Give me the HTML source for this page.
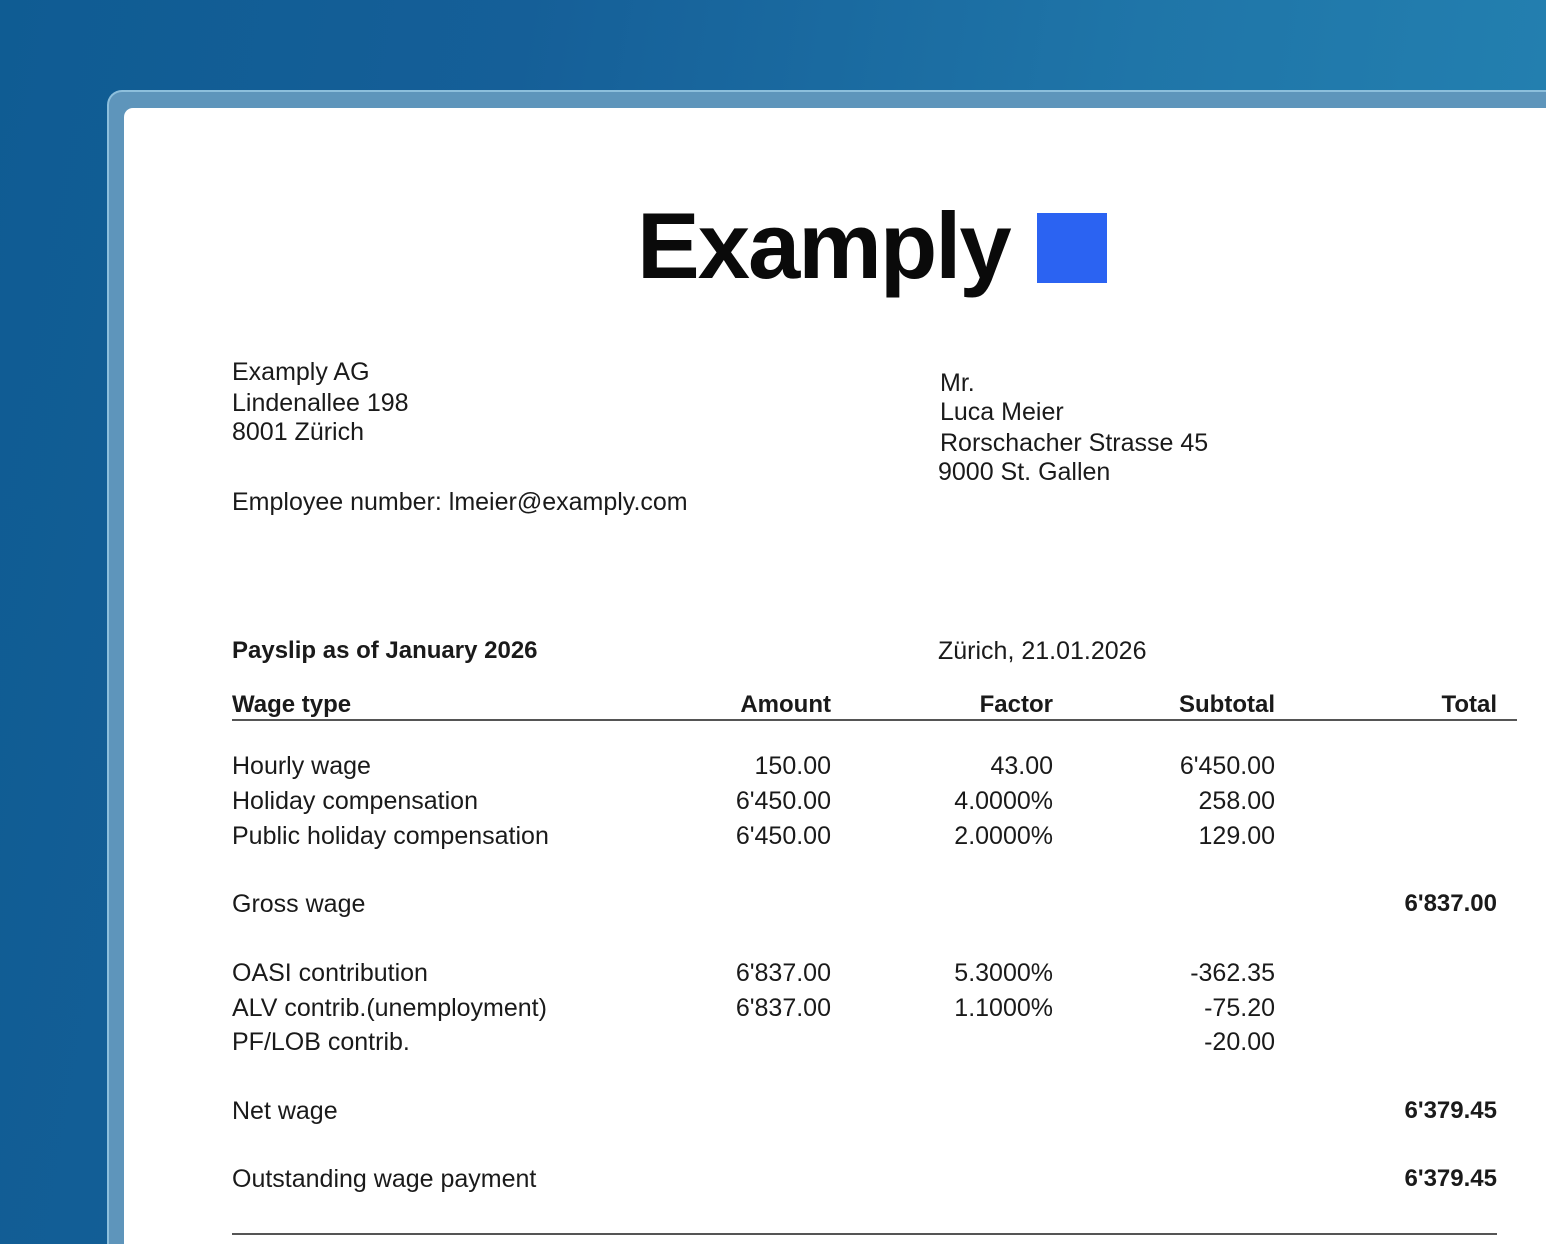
<!DOCTYPE html>
<html><head><meta charset="utf-8"><style>
html,body{margin:0;padding:0;width:1546px;height:1244px;overflow:hidden;}
body{position:relative;
background:linear-gradient(100deg,#0f5c93 0%,#155f98 30%,#1f75a8 65%,#2584b3 100%);
font-family:"Liberation Sans",Arial,sans-serif;color:#1a1a1a;}
.frame{position:absolute;left:107px;top:90px;width:1439px;height:1154px;background:#5e95bb;border-radius:15px 0 0 0;border-top:2px solid #8dbfdc;border-left:2px solid #8dbfdc;box-sizing:border-box;}
.page{position:absolute;left:124px;top:108px;width:1422px;height:1136px;background:#fff;border-radius:9px 0 0 0;}
.t{position:absolute;font-size:25px;line-height:30px;white-space:nowrap;}
.b{font-weight:bold;font-size:24px;}
.r{text-align:right;}
.logo{position:absolute;left:637px;top:186px;font-size:94px;line-height:120px;font-weight:bold;letter-spacing:-2px;color:#0a0a0a;}
.sq{position:absolute;left:1037px;top:213px;width:70px;height:70px;background:#2b63f2;}
.line{position:absolute;height:2px;background:#555;}
</style></head><body>
<div class="frame"></div>
<div class="page"></div>
<div class="logo">Examply</div>
<div class="sq"></div>

<div class="t" style="left:232px;top:357px">Examply AG</div>
<div class="t" style="left:232px;top:388px">Lindenallee 198</div>
<div class="t" style="left:232px;top:417px">8001 Zürich</div>
<div class="t" style="left:232px;top:487px">Employee number: lmeier@examply.com</div>

<div class="t" style="left:940px;top:368px">Mr.</div>
<div class="t" style="left:940px;top:397px">Luca Meier</div>
<div class="t" style="left:940px;top:428px">Rorschacher Strasse 45</div>
<div class="t" style="left:938px;top:457px">9000 St. Gallen</div>

<div class="t b" style="left:232px;top:636px">Payslip as of January 2026</div>
<div class="t" style="left:938px;top:636px">Zürich, 21.01.2026</div>

<div class="t b" style="left:232px;top:690px">Wage type</div>
<div class="t b r" style="right:715px;top:690px">Amount</div>
<div class="t b r" style="right:493px;top:690px">Factor</div>
<div class="t b r" style="right:271px;top:690px">Subtotal</div>
<div class="t b r" style="right:49px;top:690px">Total</div>
<div class="line" style="left:232px;top:719px;width:1285px"></div>

<div class="t" style="left:232px;top:751px">Hourly wage</div>
<div class="t r" style="right:715px;top:751px">150.00</div>
<div class="t r" style="right:493px;top:751px">43.00</div>
<div class="t r" style="right:271px;top:751px">6'450.00</div>

<div class="t" style="left:232px;top:786px">Holiday compensation</div>
<div class="t r" style="right:715px;top:786px">6'450.00</div>
<div class="t r" style="right:493px;top:786px">4.0000%</div>
<div class="t r" style="right:271px;top:786px">258.00</div>

<div class="t" style="left:232px;top:821px">Public holiday compensation</div>
<div class="t r" style="right:715px;top:821px">6'450.00</div>
<div class="t r" style="right:493px;top:821px">2.0000%</div>
<div class="t r" style="right:271px;top:821px">129.00</div>

<div class="t" style="left:232px;top:889px">Gross wage</div>
<div class="t b r" style="right:49px;top:889px">6'837.00</div>

<div class="t" style="left:232px;top:958px">OASI contribution</div>
<div class="t r" style="right:715px;top:958px">6'837.00</div>
<div class="t r" style="right:493px;top:958px">5.3000%</div>
<div class="t r" style="right:271px;top:958px">-362.35</div>

<div class="t" style="left:232px;top:993px">ALV contrib.(unemployment)</div>
<div class="t r" style="right:715px;top:993px">6'837.00</div>
<div class="t r" style="right:493px;top:993px">1.1000%</div>
<div class="t r" style="right:271px;top:993px">-75.20</div>

<div class="t" style="left:232px;top:1027px">PF/LOB contrib.</div>
<div class="t r" style="right:271px;top:1027px">-20.00</div>

<div class="t" style="left:232px;top:1096px">Net wage</div>
<div class="t b r" style="right:49px;top:1096px">6'379.45</div>

<div class="t" style="left:232px;top:1164px">Outstanding wage payment</div>
<div class="t b r" style="right:49px;top:1164px">6'379.45</div>

<div class="line" style="left:232px;top:1233px;width:1265px"></div>
</body></html>
